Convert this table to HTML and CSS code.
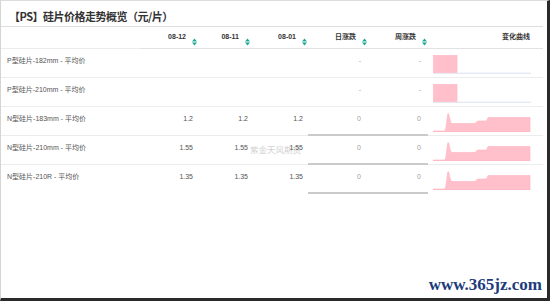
FILE: index.html
```html
<!DOCTYPE html>
<html lang="zh-CN">
<head>
<meta charset="utf-8">
<title>硅片价格走势概览</title>
<link rel="stylesheet" href="styles.css">
</head>
<body>
<div class="frame">
  <div class="title">【PS】硅片价格走势概览（元/片）</div>
  <div class="mark">紫金天风期货</div>
  <div class="grid">
    <div class="row head">
      <div class="cell"></div>
      <div class="cell hc">08-12<svg class="sort" viewBox="0 0 5 8" width="5" height="8"><path d="M0 3.4 L2.5 0.4 L5 3.4 Z M0 4.6 L5 4.6 L2.5 7.6 Z"/></svg></div>
      <div class="cell hc">08-11<svg class="sort" viewBox="0 0 5 8" width="5" height="8"><path d="M0 3.4 L2.5 0.4 L5 3.4 Z M0 4.6 L5 4.6 L2.5 7.6 Z"/></svg></div>
      <div class="cell hc">08-01<svg class="sort" viewBox="0 0 5 8" width="5" height="8"><path d="M0 3.4 L2.5 0.4 L5 3.4 Z M0 4.6 L5 4.6 L2.5 7.6 Z"/></svg></div>
      <div class="cell hc">日涨跌<svg class="sort" viewBox="0 0 5 8" width="5" height="8"><path d="M0 3.4 L2.5 0.4 L5 3.4 Z M0 4.6 L5 4.6 L2.5 7.6 Z"/></svg></div>
      <div class="cell hc">周涨跌<svg class="sort" viewBox="0 0 5 8" width="5" height="8"><path d="M0 3.4 L2.5 0.4 L5 3.4 Z M0 4.6 L5 4.6 L2.5 7.6 Z"/></svg></div>
      <div class="cell hc last">变化曲线</div>
    </div>

    <div class="row">
      <div class="cell label">P型硅片-182mm - 平均价</div>
      <div class="cell num"></div>
      <div class="cell num n2"></div>
      <div class="cell num"></div>
      <div class="cell chg">-</div>
      <div class="cell chg">-</div>
      <div class="cell spark"><svg viewBox="0 0 98 19" width="98" height="19"><rect class="base" x="0" y="17.6" width="98" height="1.4"/><rect class="fill" x="0.5" y="0.5" width="23.5" height="17"/></svg></div>
    </div>

    <div class="row">
      <div class="cell label">P型硅片-210mm - 平均价</div>
      <div class="cell num"></div>
      <div class="cell num n2"></div>
      <div class="cell num"></div>
      <div class="cell chg">-</div>
      <div class="cell chg">-</div>
      <div class="cell spark"><svg viewBox="0 0 98 19" width="98" height="19"><rect class="base" x="0" y="17.6" width="98" height="1.4"/><rect class="fill" x="0.5" y="0.5" width="23.5" height="17"/></svg></div>
    </div>

    <div class="row">
      <div class="cell label">N型硅片-183mm - 平均价</div>
      <div class="cell num">1.2</div>
      <div class="cell num n2">1.2</div>
      <div class="cell num">1.2</div>
      <div class="cell chg dark">0</div>
      <div class="cell chg dark">0</div>
      <div class="cell spark"><svg viewBox="0 0 98 19" width="98" height="19"><path class="fill" d="M0 18 L11.5 18 C13.5 18 14 0.5 15.2 0.5 C16.4 0.5 16.8 10.5 19 10.5 L42 10.5 L44.5 8 L53.5 8 L55 4.5 L97 4.5 L97 19 L0 19 Z"/></svg></div>
    </div>

    <div class="row">
      <div class="cell label">N型硅片-210mm - 平均价</div>
      <div class="cell num">1.55</div>
      <div class="cell num n2">1.55</div>
      <div class="cell num">1.55</div>
      <div class="cell chg dark">0</div>
      <div class="cell chg dark">0</div>
      <div class="cell spark"><svg viewBox="0 0 98 19" width="98" height="19"><path class="fill" d="M0 18 L11.5 18 C13.5 18 14 0.5 15.2 0.5 C16.4 0.5 16.8 10.5 19 10.5 L42 10.5 L44.5 8 L53.5 8 L55 4.5 L97 4.5 L97 19 L0 19 Z"/></svg></div>
    </div>

    <div class="row lastrow">
      <div class="cell label">N型硅片-210R - 平均价</div>
      <div class="cell num">1.35</div>
      <div class="cell num n2">1.35</div>
      <div class="cell num">1.35</div>
      <div class="cell chg dark">0</div>
      <div class="cell chg dark">0</div>
      <div class="cell spark"><svg viewBox="0 0 98 19" width="98" height="19"><path class="fill" d="M0 18 L11.5 18 C13.5 18 14 0.5 15.2 0.5 C16.4 0.5 16.8 10.5 19 10.5 L42 10.5 L44.5 8 L53.5 8 L55 4.5 L97 4.5 L97 19 L0 19 Z"/></svg></div>
    </div>
  </div>
  <div class="site">www.365jz.com</div>
</div>
</body>
</html>
```

FILE: styles.css
```css
html, body {
  margin: 0;
  padding: 0;
  background: #ffffff;
}

.frame {
  position: relative;
  box-sizing: border-box;
  width: 550px;
  height: 301px;
  border-top: 1px solid #dcdcdc;
  border-left: 1px solid #d4d4d4;
  border-right: 3px solid #2a2a2a;
  border-bottom: 3px solid #2a2a2a;
  font-family: "Liberation Sans", Arial, "Noto Sans CJK SC", sans-serif;
  overflow: hidden;
}

.title {
  height: 25px;
  box-sizing: border-box;
  padding: 8px 0 0 8px;
  font-family: "Noto Sans CJK SC", sans-serif;
  font-weight: 700;
  font-size: 11px;
  line-height: 14px;
  color: #333333;
  letter-spacing: -0.5px;
}

.grid {
  position: relative;
  z-index: 1;
  width: 542px;
}

.row {
  display: grid;
  grid-template-columns: 139px 58px 53px 57px 60px 60px 115px;
  height: 29px;
}

.row.head {
  height: 23px;
  border-top: 1px solid #dddddd;
  box-sizing: border-box;
}

.cell {
  box-sizing: border-box;
  border-bottom: 1px solid #ececec;
  font-size: 7px;
  line-height: 9px;
  color: #555555;
  padding-top: 7px;
}

.row.lastrow .cell {
  border-bottom-color: transparent;
}

.hc {
  display: flex;
  justify-content: flex-end;
  align-items: flex-start;
  padding-top: 5px;
  padding-right: 1px;
  font-weight: 700;
  color: #333333;
  border-bottom-color: #e2e2e2;
}

.hc.last {
  padding-right: 13px;
}

.sort {
  display: block;
  margin: 6px 0 0 6px;
  fill: #1fa896;
}

.label {
  padding-left: 6px;
}

.num {
  text-align: right;
  padding-right: 5px;
}

.num.n2 {
  padding-right: 3px;
}

.chg {
  text-align: right;
  padding-right: 7px;
  color: #a0a0a0;
}

.chg.dark {
  border-bottom: 2px solid #cacaca;
}

.row.lastrow .chg.dark {
  border-bottom-color: #cacaca;
}

.spark {
  padding: 6px 0 0 5px;
}

.spark svg {
  display: block;
}

.spark .fill {
  fill: #ffc0cb;
  stroke: #ffb3c0;
  stroke-width: 0.6;
}

.spark .base {
  fill: #e6e8f4;
}

.mark {
  position: absolute;
  left: 249px;
  top: 143px;
  z-index: 0;
  font-family: "Noto Sans CJK SC", sans-serif;
  font-size: 8.5px;
  line-height: 10px;
  color: #d2d2d2;
}

.site {
  position: absolute;
  right: 5px;
  bottom: 5px;
  font-family: "Liberation Serif", serif;
  font-weight: 700;
  font-size: 17px;
  line-height: 17px;
  color: #1d3c7c;
}
```
